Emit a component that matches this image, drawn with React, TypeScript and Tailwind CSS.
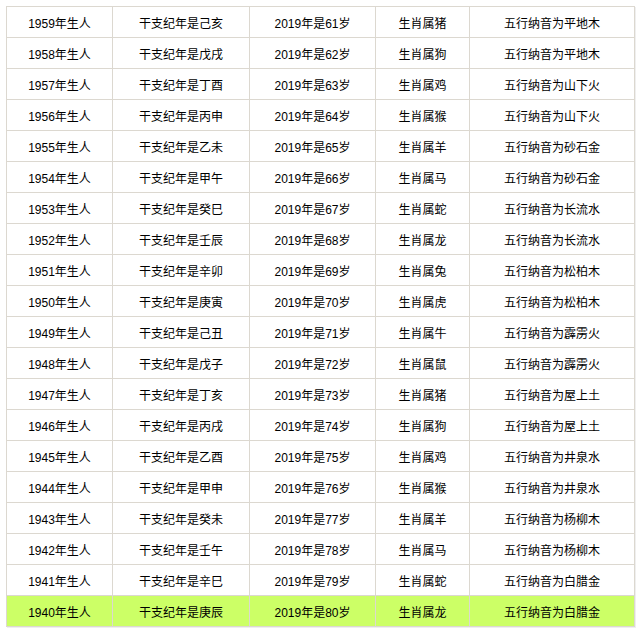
import React from "react";

const rows: [string, string, string, string, string][] = [
  ["1959", "己亥", "61", "猪", "平地木"],
  ["1958", "戊戌", "62", "狗", "平地木"],
  ["1957", "丁酉", "63", "鸡", "山下火"],
  ["1956", "丙申", "64", "猴", "山下火"],
  ["1955", "乙未", "65", "羊", "砂石金"],
  ["1954", "甲午", "66", "马", "砂石金"],
  ["1953", "癸巳", "67", "蛇", "长流水"],
  ["1952", "壬辰", "68", "龙", "长流水"],
  ["1951", "辛卯", "69", "兔", "松柏木"],
  ["1950", "庚寅", "70", "虎", "松柏木"],
  ["1949", "己丑", "71", "牛", "霹雳火"],
  ["1948", "戊子", "72", "鼠", "霹雳火"],
  ["1947", "丁亥", "73", "猪", "屋上土"],
  ["1946", "丙戌", "74", "狗", "屋上土"],
  ["1945", "乙酉", "75", "鸡", "井泉水"],
  ["1944", "甲申", "76", "猴", "井泉水"],
  ["1943", "癸未", "77", "羊", "杨柳木"],
  ["1942", "壬午", "78", "马", "杨柳木"],
  ["1941", "辛巳", "79", "蛇", "白腊金"],
  ["1940", "庚辰", "80", "龙", "白腊金"],
];

export default function App() {
  return (
    <div
      className="w-[640px] h-[634px] bg-white pt-[6px] pl-[6px]"
      style={{ fontFamily: '"Liberation Sans", "Noto Sans CJK SC", sans-serif' }}
    >
      <div className="w-[629px] border-l border-t border-[#dcd8d0] shadow-[1px_1px_0_#efefef] text-[12px] text-black">
        {rows.map((r, i) => {
          const last = i === rows.length - 1;
          const cells = [
            `${r[0]}年生人`,
            `干支纪年是${r[1]}`,
            `2019年是${r[2]}岁`,
            `生肖属${r[3]}`,
            `五行纳音为${r[4]}`,
          ];
          return (
            <div
              key={r[0]}
              className={`grid grid-cols-[106px_137px_126px_94px_165px] h-[31px] ${last ? "bg-[#ccff66]" : ""}`}
            >
              {cells.map((c, j) => (
                <div
                  key={j}
                  className="flex items-center justify-center pt-[3px] border-r border-b border-[#dcd8d0] leading-none"
                >
                  {c}
                </div>
              ))}
            </div>
          );
        })}
      </div>
    </div>
  );
}
